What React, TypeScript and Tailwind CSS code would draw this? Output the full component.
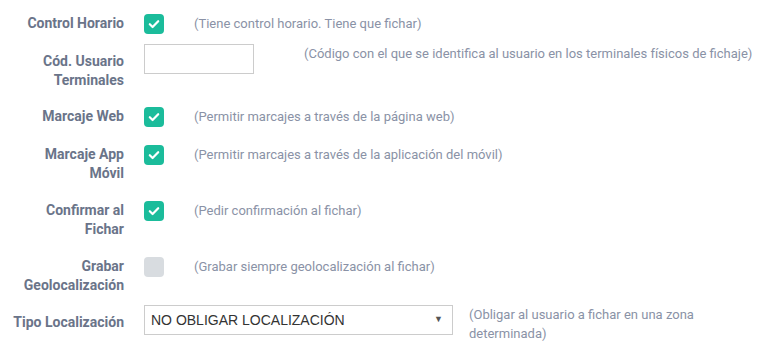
import React from 'react';

function Check({ on }: { on: boolean }) {
  return (
    <span
      className={
        'flex h-[20px] w-[20px] shrink-0 items-center justify-center rounded-[4px] ' +
        (on ? 'bg-[#1bbc9b]' : 'bg-[#d8dce0]')
      }
    >
      {on && (
        <svg width="12" height="10" viewBox="0 0 12 10" fill="none">
          <path d="M1.8 5.2 4.6 8 10.2 2.2" stroke="#fff" strokeWidth="2.2" strokeLinecap="round" strokeLinejoin="round" />
        </svg>
      )}
    </span>
  );
}

function Label({ children, pt = '' }: { children: React.ReactNode; pt?: string }) {
  return (
    <div className={'w-[114px] shrink-0 text-right text-[14px] font-bold leading-[19px] text-[#6a7489] ' + pt}>
      {children}
    </div>
  );
}

function CheckRow({ label, on, desc, mt }: { label: string; on: boolean; desc: string; mt: string }) {
  return (
    <div className={'flex items-start ' + mt}>
      <Label>{label}</Label>
      <div className="ml-[20px]">
        <Check on={on} />
      </div>
      <p className="ml-[30px] text-[13px] leading-[19px] text-[#8a92a6]">{desc}</p>
    </div>
  );
}

export default function App() {
  return (
    <div className="min-h-[354px] w-[766px] bg-white pl-[10px] pr-[15px] pt-[14px] font-['Roboto',sans-serif]">
      {/* control horario */}
      <CheckRow label="Control Horario" on desc="(Tiene control horario. Tiene que fichar)" mt="" />

      {/* código terminales */}
      <div className="mt-[10px] flex items-start">
        <Label pt="pt-[8px]">Cód. Usuario Terminales</Label>
        <input className="ml-[20px] h-[30px] w-[110px] border border-[#cccccc] bg-white outline-none" />
        <p className="ml-[50px] whitespace-nowrap text-[13px] leading-[19px] text-[#8a92a6]">
          (Código con el que se identifica al usuario en los terminales físicos de fichaje)
        </p>
      </div>

      <CheckRow label="Marcaje Web" on desc="(Permitir marcajes a través de la página web)" mt="mt-[17px]" />
      <CheckRow label="Marcaje App Móvil" on desc="(Permitir marcajes a través de la aplicación del móvil)" mt="mt-[18px]" />
      <CheckRow label="Confirmar al Fichar" on desc="(Pedir confirmación al fichar)" mt="mt-[18px]" />
      <CheckRow label="Grabar Geolocalización" on={false} desc="(Grabar siempre geolocalización al fichar)" mt="mt-[18px]" />

      {/* tipo localización */}
      <div className="mt-[10px] flex items-start">
        <Label pt="pt-[8px]">Tipo Localización</Label>
        <div className="ml-[20px] flex h-[30px] w-[309px] shrink-0 items-center justify-between border border-[#cccccc] bg-white pl-[6px] pr-[9px] font-['Liberation_Sans',sans-serif] text-[14px] text-[#333333]">
          <span>NO OBLIGAR LOCALIZACIÓN</span>
          <span className="text-[9px] text-[#555555]">▼</span>
        </div>
        <p className="ml-[16px] text-[13px] leading-[19px] text-[#8a92a6]">
          (Obligar al usuario a fichar en una zona determinada)
        </p>
      </div>
    </div>
  );
}
